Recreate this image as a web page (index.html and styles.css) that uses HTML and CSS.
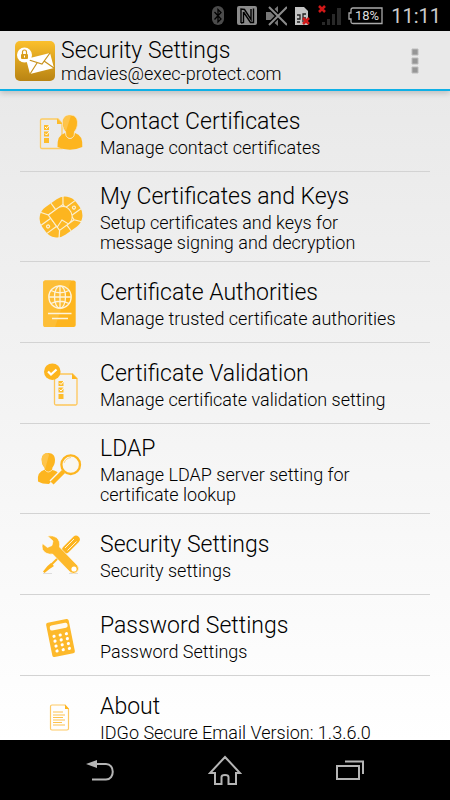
FILE: index.html
```html
<!DOCTYPE html>
<html lang="en">
<head>
<meta charset="utf-8">
<meta name="viewport" content="width=device-width, initial-scale=1">
<title>Security Settings</title>
<link rel="stylesheet" href="styles.css">
</head>
<body>
<div class="status">
  <svg width="19" height="22" viewBox="0 0 19 22" aria-hidden="true"><rect x="1" y="1" width="12" height="19" rx="6" fill="#4b4b4b"/><path d="M3.500 7 L10 14 L7 17 V4.500 L10 7.500 L3.500 14.500" fill="none" stroke="#000" stroke-width="1.300"/></svg>
  <svg width="22" height="22" viewBox="0 0 22 22" aria-hidden="true"><rect x="0" y="1" width="20" height="19" rx="2" fill="#8b8b8b"/><path d="M4 18 V4 L7.500 4.500 L14 14.500 V4 M6.500 7 V17.500 L4 18 M6.500 7 L13.500 17.500 H16.500 V3.500" fill="none" stroke="#000" stroke-width="1.400"/></svg>
  <svg width="21" height="22" viewBox="0 0 21 22" aria-hidden="true"><path d="M0 7 H5 L12 1 V21 L5 15 H0Z" fill="#777"/><path d="M3 2 L21 20 M21 2 L3 20" stroke="#000" stroke-width="5"/><path d="M3 2 L21 20 M21 2 L3 20" stroke="#8b8b8b" stroke-width="2"/></svg>
  <svg width="16" height="22" viewBox="0 0 16 22" aria-hidden="true"><path d="M1 2 H10 L14 6 V20 H1Z" fill="#c4c4c4"/><path d="M3 10 H6 V14 H3 M3 17 H6 M9 17 V9 H12 M9 13 H12" stroke="#222" stroke-width="1.300" fill="none"/><path d="M9 13 L15 19 M15 13 L9 19" stroke="#d01818" stroke-width="2.500"/></svg>
  <svg width="24" height="22" viewBox="0 0 24 22" aria-hidden="true"><path d="M5 17 H8 V20 H5Z M10 14 H13 V20 H10Z M15 9 H18 V20 H15Z M20 3 H24 V20 H20Z" fill="#292929"/><path d="M2 1 L8 7 M8 1 L2 7" stroke="#d01818" stroke-width="2.500"/></svg>
  <svg width="36" height="22" viewBox="0 0 36 22" aria-hidden="true"><path d="M5 3 H34 V18.500 H5 Q3 18.500 3 17 V14 H1 V8 H3 V5 Q3 3 5 3Z" fill="none" stroke="#aaa" stroke-width="1.300"/><text class="battery" x="19" y="15" text-anchor="middle">18%</text></svg>
  <span class="clock">11:11</span>
</div>

<header class="bar">
  <svg class="app" width="40" height="40" viewBox="0 0 40 40" aria-hidden="true">
    <defs><linearGradient id="gold" x2="0" y2="1"><stop offset="0" stop-color="#fbc02c"/><stop offset="1" stop-color="#b98413"/></linearGradient></defs>
    <rect width="40" height="40" rx="5" fill="url(#gold)"/>
    <path d="M11 18 L35 12 L39 27 L15 33Z" fill="#fff"/>
    <path d="M11 18 L27 23 L35 12 M15 33 L22 22 M39 27 L29 20" fill="none" stroke="#c8921c" stroke-width="1.200"/>
    <circle cx="9.500" cy="14" r="7.500" fill="#fff"/>
    <rect x="6" y="13" width="7" height="5" rx="1" fill="#d99e1b"/><path d="M7.500 13 V11 A2 2 0 0 1 11.500 11 V13" fill="none" stroke="#d99e1b" stroke-width="1.200"/><path d="M9.500 14.500 V16.500" stroke="#fff"/>
  </svg>
  <div class="heading">
    <h1 class="title">Security Settings</h1>
    <p class="account">mdavies@exec-protect.com</p>
  </div>
  <button class="more" aria-label="More options"><svg width="8" height="28" viewBox="0 0 8 28"><path d="M1 2 H7 V8 H1Z M1 11 H7 V17 H1Z M1 20 H7 V26 H1Z" fill="#969696" stroke="#bcbcbc"/></svg></button>
</header>

<main class="list">
  <a class="row" href="#contacts">
    <svg class="icon" viewBox="0 0 52 52" aria-hidden="true">
      <path d="M7 13 H23 L27 17.500 V42.500 H7 Q5.500 42.500 5.500 41 V14.500 Q5.500 13 7 13Z" fill="none" stroke="#fdcb62" stroke-width="1.300"/><path d="M22 12.500 L27.500 18 H22Z" fill="#fdbc2c"/>
      <path d="M9 19 H14 V24 H9Z M9 25.500 H14 V30.500 H9Z M9 32 H14 V37 H9Z" fill="#fdbc2c"/><path d="M10 21 L11.500 22.500 L14.500 19 M10 27.500 L11.500 29 L14.500 25.500" fill="none" stroke="#fff"/>
      <path d="M30 27 Q35 39 40 27 Q48 29 47.300 41 Q35 46.500 22.500 41 Q22 29 30 27Z" fill="#fdb51f"/>
      <path d="M35 9 C40 9 42.500 12 42.500 17 C42.500 21 41 24 39.500 25.500 L39 30 Q35 35 31 30 L30.500 25.500 C29 24 27.500 21 27.500 17 C27.500 12 30 9 35 9Z" fill="#fdb51f" stroke="#f6e8c8" stroke-width=".8"/>
      <path d="M34 9.500 C29.500 10 28 13 28 17 Q28.500 22 31 25 L36 9.500Z" fill="#fec44a"/>
    </svg>
    <span class="text"><span class="name">Contact Certificates</span><span class="note">Manage contact certificates</span></span>
  </a>
  <a class="row" href="#mine">
    <svg class="icon" viewBox="0 0 52 52" aria-hidden="true">
      <g transform="rotate(-36 26 26)"><rect x="5" y="9" width="42" height="34" rx="14" fill="#fdb927"/>
      <g fill="none" stroke="#fbf0d4" stroke-width="1.200"><path d="M5 21 H17 M5 31 H17 M35 21 H47 M35 31 H47 M12 10 L17 17 V36 L12 42 M40 10 L35 17 V36 L40 42 M17 17 H35 M17 36 H35 M26 9 V17 M26 36 V43"/><circle cx="10" cy="26" r="1.500"/><circle cx="42" cy="26" r="1.500"/></g>
      <path d="M17 17 H30 Q38 19 37 28 Q35 36 28 36 L25 29 L17 32Z" fill="#fdb51f" stroke="#fbf0d4"/></g>
    </svg>
    <span class="text"><span class="name">My Certificates and Keys</span><span class="note">Setup certificates and keys for message signing and decryption</span></span>
  </a>
  <a class="row" href="#authorities">
    <svg class="icon" viewBox="0 0 52 52" aria-hidden="true">
      <rect x="8.300" y="3.500" width="32.400" height="46.500" rx="2" fill="#fdb51f"/><path d="M10 3.500 H36 L20 50 H10 Q8.300 50 8.300 48 V5.500 Q8.300 3.500 10 3.500Z" fill="#fdbe37"/>
      <g fill="none" stroke="#fdf3dc" stroke-width="1.300"><circle cx="25" cy="20" r="11.200"/><ellipse cx="25" cy="20" rx="5.500" ry="11.200"/><path d="M25 9 V31 M14 20 H36 M16 13.500 Q25 18 34 13.500 M16 26.500 Q25 22 34 26.500 M13 36.500 H36.500 M17 41.500 H33"/></g>
    </svg>
    <span class="text"><span class="name">Certificate Authorities</span><span class="note">Manage trusted certificate authorities</span></span>
  </a>
  <a class="row" href="#validation">
    <svg class="icon" viewBox="0 0 52 52" aria-hidden="true">
      <path d="M21 16 H37.500 L42 20.500 V45.500 Q42 47 40.500 47 H21 Q19.500 47 19.500 45.500 V17.500 Q19.500 16 21 16Z" fill="none" stroke="#fdc65a" stroke-width="1.300"/><path d="M37 15.500 L42.500 21 H37Z" fill="#fdb51f"/>
      <path d="M23.500 23 H28.500 V28 H23.500Z M23.500 29.500 H28.500 V34.500 H23.500Z M23.500 36 H28.500 V41 H23.500Z" fill="#fdbc2c"/><path d="M24.500 25 L26 26.500 L29 23 M24.500 31.500 L26 33 L29 29.500" fill="none" stroke="#fff"/>
      <circle cx="17.300" cy="13.700" r="8.300" fill="#fdb51f"/><path d="M13 13.500 L16 16.500 L21.500 11.500" fill="none" stroke="#fff" stroke-width="2.200"/>
    </svg>
    <span class="text"><span class="name">Certificate Validation</span><span class="note">Manage certificate validation setting</span></span>
  </a>
  <a class="row" href="#ldap">
    <svg class="icon" viewBox="0 0 52 52" aria-hidden="true">
      <path d="M13.300 10 C18 10 20 13 20 17 C20 21 18.500 23 17.500 24.500 L17 27 Q22 28 23 30 L14 41 Q7 41 3 38.500 Q1.500 29 10 26.500 L9.500 24.500 C8 23 6.700 21 6.700 17 C6.700 13 8.500 10 13.300 10Z" fill="#fdb51f"/>
      <path d="M13 10 C8.500 10 6.700 13 6.700 17 Q7 22 9.500 24.500 L10 26.500 L14 12Z" fill="#fec44a"/><path d="M10 27 Q13 31 17 27" fill="none" stroke="#fdebc2" stroke-width=".8"/>
      <path d="M28.500 28.500 L17 40" stroke="#f7f7f7" stroke-width="7"/><path d="M28.500 28.500 L17 40" stroke="#fdb51f" stroke-width="4.500"/><circle cx="35.700" cy="21.700" r="9.300" fill="#f9f7f1" stroke="#fdb51f" stroke-width="2.300"/><path d="M29 20 Q31 15 36 14.500" fill="none" stroke="#fdd37d"/>
    </svg>
    <span class="text"><span class="name">LDAP</span><span class="note">Manage LDAP server setting for certificate lookup</span></span>
  </a>
  <a class="row" href="#security">
    <svg class="icon" viewBox="0 0 52 52" aria-hidden="true">
      <path d="M8 44.500 H17 M34 44.500 H43" stroke="#ddd"/>
      <path d="M31 21 L15.500 36.500" stroke="#fdb51f" stroke-width="2"/><path d="M16 34 L19 37 L14.500 40 L9.500 44 L8 42.500 L12.500 37Z" fill="#fdb51f"/>
      <path d="M41 10.500 L31 20.500" stroke="#fdb51f" stroke-width="7.500" stroke-linecap="round"/><path d="M39 10 L30 19 M41.500 12.500 L32.500 21.500" stroke="#fff2d3"/>
      <path d="M12.500 7 Q18 6 21.500 8.500 Q25.500 12 24.500 18 L42.500 36.500 Q45 40 42 43 Q38.500 46 35 43 L17.500 25 Q11 26 7.500 20.500 Q6.500 17 7.500 14.500 L12.500 18.500 L17 16.500 L18 12Z" fill="#fdb92b" stroke="#fff" stroke-width=".6"/><circle cx="39" cy="40" r="2.600" fill="#fff"/>
    </svg>
    <span class="text"><span class="name">Security Settings</span><span class="note">Security settings</span></span>
  </a>
  <a class="row" href="#password">
    <svg class="icon" viewBox="0 0 52 52" aria-hidden="true">
      <g transform="rotate(-11.500 25.500 28)"><rect x="14" y="10.500" width="23" height="35" rx="2" fill="#fdb92b"/><rect x="17" y="14" width="18" height="5" rx="2" fill="#fffaf0"/>
      <path d="M19.500 25 H32.500 M19.500 30 H32.500 M19.500 35 H32.500 M19.500 40 H32.500" stroke="#fff" stroke-width="3.200" stroke-linecap="round" stroke-dasharray="0 6.300"/></g>
    </svg>
    <span class="text"><span class="name">Password Settings</span><span class="note">Password Settings</span></span>
  </a>
  <a class="row" href="#about">
    <svg class="icon" viewBox="0 0 52 52" aria-hidden="true">
      <path d="M17 14 H30 L33.500 18 V37.500 Q33.500 39 32 39 H17 Q15.500 39 15.500 37.500 V15.500 Q15.500 14 17 14Z" fill="none" stroke="#fdc964" stroke-width="1.200"/><path d="M30 13.500 L34 18 H30Z" fill="#fdb51f"/>
      <path d="M18 21 H28 M18 24 H30 M18 26.500 H28 M18 29 H30 M18 31.500 H27 M18 34 H30" stroke="#fdc24c" stroke-width="1.200"/>
    </svg>
    <span class="text"><span class="name">About</span><span class="note">IDGo Secure Email Version: 1.3.6.0</span></span>
  </a>
</main>

<nav class="nav">
  <button aria-label="Back"><svg width="32" height="32" viewBox="0 0 32 32"><path d="M13 10 H22 C31 10 31 25.500 22 25.500 H8" fill="none" stroke="#b5b5b5" stroke-width="2"/><path d="M2 10 L13 6 V14Z" fill="#b5b5b5"/></svg></button>
  <button aria-label="Home"><svg width="34" height="32" viewBox="0 0 34 32"><path d="M17 3 L32 19 H28 V30 H20.500 V23 Q20.500 21 17 21 Q13.500 21 13.500 23 V30 H7 V19 H2Z" fill="none" stroke="#b5b5b5" stroke-width="2"/></svg></button>
  <button aria-label="Recent apps"><svg width="32" height="32" viewBox="0 0 32 32"><path d="M3 12 H25 V25 H3Z M11 7.500 H29 V20" fill="none" stroke="#b5b5b5" stroke-width="2"/></svg></button>
</nav>
</body>
</html>
```
FILE: styles.css
```css
* {
  box-sizing: border-box;
}

body {
  display: flex;
  flex-direction: column;
  height: 100vh;
  margin: 0;
  background: #000;
  color: #000;
  font-family: Roboto, "Liberation Sans", sans-serif;
  font-weight: 300;
}

button {
  display: flex;
  align-items: center;
  justify-content: center;
  padding: 0;
  border: 0;
  background: none;
}

.status {
  display: flex;
  flex: none;
  align-items: center;
  justify-content: flex-end;
  gap: 7px;
  padding: 5px 9px 4px;
}

.battery {
  fill: #ddd;
  font-size: 13px;
  font-weight: 400;
}

.clock {
  color: #ccc;
  font-size: 20px;
  font-weight: 400;
  line-height: 22px;
}

.bar {
  position: relative;
  display: flex;
  flex: none;
  align-items: center;
  gap: 6px;
  padding: 7px 15px 5px;
  border-bottom: 2px solid #0fb0e6;
  background: #e9e9e9;
  box-shadow: 0 2px 6px rgba(0, 0, 0, 0.2);
}

.app {
  flex: none;
}

.heading {
  flex: 1;
}

.title,
.account {
  margin: 0;
  font-weight: inherit;
}

.title {
  font-size: 23px;
  line-height: 26px;
}

.account {
  font-size: 18px;
  line-height: 20px;
}

.more {
  width: 40px;
  height: 40px;
}

.list {
  flex: 1;
  min-height: 0;
  padding: 0 20px;
  overflow-y: auto;
  scrollbar-width: none;
  background: linear-gradient(#e9e9e9, #fff);
}

.row {
  display: flex;
  align-items: center;
  gap: 13px;
  min-height: 81px;
  padding: 9px 15px 8px;
  border-bottom: 1px solid #d3d3d3;
  color: inherit;
  text-decoration: none;
}

.icon {
  flex: none;
  width: 52px;
  height: 52px;
}

.text {
  flex: 1;
}

.name,
.note {
  display: block;
}

.name {
  font-size: 23px;
  line-height: 32px;
}

.note {
  max-width: 300px;
  font-size: 18px;
  line-height: 20px;
}

.nav {
  display: flex;
  flex: none;
  align-items: center;
  justify-content: space-around;
  height: 60px;
  padding: 0 37px;
}

.nav button {
  width: 60px;
  height: 60px;
}
```
